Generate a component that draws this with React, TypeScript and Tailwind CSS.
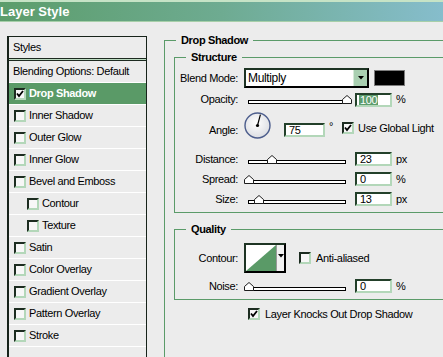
import React from 'react';

const STYLES = [
  { name: 'Drop Shadow', checked: true, active: true },
  { name: 'Inner Shadow' },
  { name: 'Outer Glow' },
  { name: 'Inner Glow' },
  { name: 'Bevel and Emboss' },
  { name: 'Contour', indent: true },
  { name: 'Texture', indent: true },
  { name: 'Satin' },
  { name: 'Color Overlay' },
  { name: 'Gradient Overlay' },
  { name: 'Pattern Overlay' },
  { name: 'Stroke' },
];

const Check: React.FC<{ checked?: boolean }> = ({ checked }) => (
  <span className="w-[12px] h-[12px] shrink-0 border-2 border-t-[#1c2c20] border-l-[#1c2c20] border-r-[#b3d7b9] border-b-[#b3d7b9] bg-[#f7f7f7] flex items-center justify-center">
    {checked && (
      <svg width="8" height="8" viewBox="0 0 8 8">
        <path d="M1 3.5 L3 6 L7 1" stroke="#000" strokeWidth="1.8" fill="none" />
      </svg>
    )}
  </span>
);

const Slider: React.FC<{ pos: number }> = ({ pos }) => (
  <div className="relative w-[108px] h-[9px] shrink-0">
    <div className="absolute left-[4px] right-[6px] bottom-0 h-[4px] border border-black bg-white" />
    <svg className="absolute bottom-0" style={{ left: pos * 98 }} width="10" height="9" viewBox="0 0 10 9">
      <path d="M0.5 8.5 V4.5 L5 0.5 L9.5 4.5 V8.5 Z" fill="#fff" stroke="#1d1d1d" strokeWidth="1" />
    </svg>
  </div>
);

const NumBox: React.FC<{ value: string; unit?: string; selected?: boolean }> = ({ value, unit, selected }) => (
  <div className="flex items-center">
    <div className="ml-[3px] w-[37px] h-[14px] border-2 border-t-[#23402a] border-l-[#23402a] border-r-[#b3d7b9] border-b-[#b3d7b9] bg-white flex items-center pl-[2px] leading-[10px]">
      {selected ? <span className="bg-[#5c9c6c] text-white px-[1px]">{value}</span> : <span className="pl-[1px]">{value}</span>}
    </div>
    {unit && <span className="ml-[4px]">{unit}</span>}
  </div>
);

const Label: React.FC<{ children: React.ReactNode }> = ({ children }) => (
  <span className="w-[63px] shrink-0 text-right mr-[6px]">{children}</span>
);

export default function App() {
  return (
    <div className="w-[443px] h-[357px] overflow-hidden bg-[#ececec] text-black text-[11px] font-['Liberation_Sans',Arial,sans-serif] flex flex-col">
      {/* Title bar */}
      <div className="h-[22px] shrink-0 border-t-2 border-b border-t-[#c6e3c6] border-b-[#a7cfa9] bg-gradient-to-r from-[#5c9d6b] via-[#6eab91] to-[#86bdcc] flex items-center">
        <span className="text-white font-bold text-[13px] leading-none">Layer Style</span>
      </div>

      <div className="flex flex-1 min-h-0 tracking-[-0.35px]">
        {/* Styles list */}
        <div className="ml-[7px] mt-[14px] w-[140px] h-[340px] shrink-0 border-t border-l-2 border-r border-[#17231a] flex flex-col">
          <div className="h-[21px] flex items-center pl-[4px]">Styles</div>
          <div className="h-[1px] bg-[#1d2a20]" />
          <div className="h-[1px] bg-[#bcdcc1]" />
          <div className="h-[1px] bg-[#1d2a20]" />
          <div className="h-[21px] flex items-center pl-[4px]">Blending Options: Default</div>
          {STYLES.map((s) => (
            <div key={s.name} className="border-t border-white">
              <div
                className={`h-[21px] flex items-center gap-[3px] ${s.indent ? 'pl-[18px]' : 'pl-[5px]'} ${s.active ? 'bg-[#5a9a67] text-white font-bold' : ''}`}
              >
                <Check checked={s.checked} />
                <span>{s.name}</span>
              </div>
            </div>
          ))}
          <div className="border-t border-white" />
        </div>

        {/* Drop Shadow panel */}
        <fieldset className="ml-[17px] mt-[11px] flex-1 min-w-0 border-l border-t border-[#5b9b69] flex flex-col">
          <legend className="ml-[11px] px-[5px] h-[14px] leading-[14px] font-bold">Drop Shadow</legend>

          {/* Structure */}
          <fieldset className="ml-[9px] mt-[3px] min-w-0 border-l border-t border-b border-[#5b9b69] pb-[6px]">
            <legend className="ml-[11px] px-[5px] h-[14px] leading-[14px] font-bold">Structure</legend>

            <div className="mt-[4px] h-[20px] flex items-center">
              <Label>Blend Mode:</Label>
              <div className="w-[125px] h-[20px] border-2 border-t-[#1e3424] border-l-[#1e3424] border-r-black border-b-black bg-white flex">
                <span className="flex-1 pl-[2px] leading-[16px] text-[12px]">Multiply</span>
                <span className="w-[14px] h-full bg-[#a9cfb1] border-l border-[#d6ead9] flex items-center justify-center">
                  <svg width="6" height="4" viewBox="0 0 6 4">
                    <path d="M0 0 H6 L3 3.5 Z" fill="#000" />
                  </svg>
                </span>
              </div>
              <div className="ml-[5px] w-[31px] h-[16px] bg-black border border-[#7c7c7c]" />
            </div>

            <div className="mt-[4px] h-[15px] flex items-center">
              <Label>Opacity:</Label>
              <Slider pos={1} />
              <NumBox value="100" unit="%" selected />
            </div>

            <div className="mt-[5px] h-[27px] flex items-end">
              <span className="w-[63px] shrink-0 text-right mr-[6px] mb-[2px] h-[14px] leading-[14px]">Angle:</span>
              <svg width="27" height="27" viewBox="0 0 27 27" className="shrink-0">
                <defs>
                  <radialGradient id="dial" cx="45%" cy="40%" r="65%">
                    <stop offset="0%" stopColor="#ffffff" />
                    <stop offset="100%" stopColor="#d9dbe0" />
                  </radialGradient>
                </defs>
                <circle cx="13.5" cy="13.5" r="12.5" fill="url(#dial)" stroke="#4c5d8c" strokeWidth="1.4" />
                <line x1="13.5" y1="13.5" x2="16.4" y2="2.6" stroke="#000" strokeWidth="1.2" />
                <circle cx="13.5" cy="13.5" r="1.6" fill="#000" />
              </svg>
              <div className="ml-[13px] mb-[2px] w-[41px] h-[14px] border-2 border-t-[#23402a] border-l-[#23402a] border-r-[#b3d7b9] border-b-[#b3d7b9] bg-white pl-[3px] leading-[10px]">
                75
              </div>
              <span className="ml-[4px] mb-[6px] leading-[14px]">°</span>
              <div className="ml-[9px] mb-[3px] flex items-center gap-[4px]">
                <Check checked />
                <span>Use Global Light</span>
              </div>
            </div>

            <div className="mt-[13px] h-[14px] flex items-center">
              <Label>Distance:</Label>
              <Slider pos={0.23} />
              <NumBox value="23" unit="px" />
            </div>
            <div className="mt-[6px] h-[14px] flex items-center">
              <Label>Spread:</Label>
              <Slider pos={0} />
              <NumBox value="0" unit="%" />
            </div>
            <div className="mt-[6px] h-[14px] flex items-center">
              <Label>Size:</Label>
              <Slider pos={0.107} />
              <NumBox value="13" unit="px" />
            </div>
          </fieldset>

          {/* Quality */}
          <fieldset className="ml-[9px] mt-[9px] min-w-0 border-l border-t border-b border-[#5b9b69] pb-[6px]">
            <legend className="ml-[11px] px-[5px] h-[14px] leading-[14px] font-bold">Quality</legend>

            <div className="mt-[7px] h-[30px] flex items-center">
              <Label>Contour:</Label>
              <div className="w-[42px] h-[30px] border-2 border-t-[#1e3424] border-l-[#1e3424] border-r-black border-b-black bg-white flex">
                <svg width="30" height="26" viewBox="0 0 30 26" className="shrink-0">
                  <path d="M0 26 L30 0 V26 Z" fill="#5a9a67" />
                </svg>
                <span className="flex-1 bg-[#f2f2f2] border-l border-[#9a9a9a] flex items-start justify-center pt-[9px]">
                  <svg width="6" height="4" viewBox="0 0 6 4">
                    <path d="M0 0 H6 L3 3.5 Z" fill="#000" />
                  </svg>
                </span>
              </div>
              <div className="ml-[13px] flex items-center gap-[5px]">
                <Check />
                <span>Anti-aliased</span>
              </div>
            </div>

            <div className="mt-[6px] h-[14px] flex items-center">
              <Label>Noise:</Label>
              <Slider pos={0} />
              <NumBox value="0" unit="%" />
            </div>
          </fieldset>

          <div className="mt-[8px] h-[12px] ml-[83px] flex items-center gap-[5px]">
            <Check checked />
            <span>Layer Knocks Out Drop Shadow</span>
          </div>
        </fieldset>
      </div>
    </div>
  );
}
